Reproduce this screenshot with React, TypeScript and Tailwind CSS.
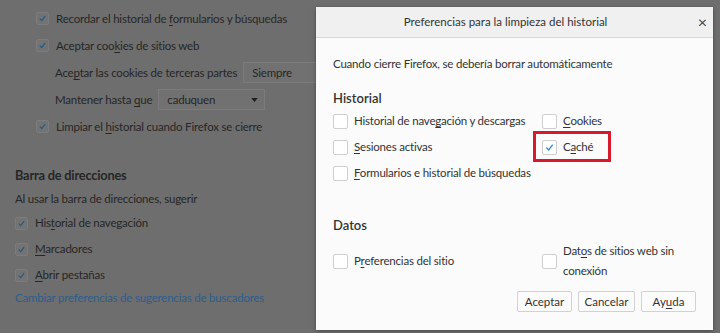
const font = { fontFamily: '"Lato", "Liberation Sans", sans-serif' };

const Check = ({ color }: { color: string }) => (
  <svg viewBox="0 0 16 16" className="h-full w-full">
    <polyline points="4.5,8.5 7,11 11.5,5" fill="none" stroke={color} strokeWidth={1.6} strokeLinecap="round" strokeLinejoin="round" />
  </svg>
);

// underlines one letter of a label (access key)
const Key = ({ text, k }: { text: string; k: number }) => (
  <>
    {text.slice(0, k)}
    <span className="underline underline-offset-2">{text[k]}</span>
    {text.slice(k + 1)}
  </>
);

const DimBox = ({ checked = true }: { checked?: boolean }) => (
  <span className="flex h-[13px] w-[13px] shrink-0 items-center justify-center rounded-[2px] border border-[#7c7c7c] bg-[#737373]">
    {checked && <Check color="#1f5a88" />}
  </span>
);

const DimRow = ({ children }: { children: React.ReactNode }) => (
  <div className="flex h-[26px] items-center gap-[7px] pl-[15px]">
    <DimBox />
    <span>{children}</span>
  </div>
);

const Box = ({ checked }: { checked?: boolean }) => (
  <span className="flex h-[15px] w-[15px] shrink-0 items-center justify-center rounded-[2px] border border-[#cfcfcf] bg-white">
    {checked && <Check color="#2a8ad4" />}
  </span>
);

const Option = ({ children, checked }: { children: React.ReactNode; checked?: boolean }) => (
  <div className="flex h-[26px] items-center gap-[6px] whitespace-nowrap">
    <Box checked={checked} />
    <span>{children}</span>
  </div>
);

const Button = ({ children, w }: { children: React.ReactNode; w: string }) => (
  <button className={`h-[21px] ${w} rounded-[2px] border border-[#d2d2d2] bg-[#fbfbfb] text-[11.5px] tracking-normal text-[#333]`}>
    {children}
  </button>
);

export default function App() {
  return (
    <div style={font} className="relative h-[333px] w-[720px] overflow-hidden bg-[#6e6e6e] text-[11.5px] tracking-[-0.2px] text-[#262626]">
      {/* page behind the dialog */}
      <div className="whitespace-nowrap pt-[5px]">
        <div className="flex h-[27px] items-center gap-[7px] pl-[36px]">
          <DimBox />
          <span>Recordar el historial de <Key text="formularios" k={0} /> y búsquedas</span>
        </div>
        <div className="flex h-[27px] items-center gap-[7px] pl-[36px]">
          <DimBox />
          <span>Aceptar coo<Key text="kies" k={0} /> de sitios web</span>
        </div>
        <div className="flex h-[27px] items-center gap-[6px] pl-[55px]">
          <span><Key text="Aceptar" k={3} /> las cookies de terceras partes</span>
          <span className="flex h-[21px] w-[120px] items-center border border-[#7b7b7b] bg-[#717171] pl-[8px]">Siempre</span>
        </div>
        <div className="flex h-[27px] items-center gap-[6px] pl-[55px]">
          <span>Mantener hasta <Key text="que" k={0} /></span>
          <span className="flex h-[21px] w-[107px] items-center justify-between border border-[#7b7b7b] bg-[#717171] pl-[8px] pr-[6px]">
            caduquen
            <svg viewBox="0 0 8 5" className="h-[4px] w-[7px]"><polygon points="0,0 8,0 4,5" fill="#1f1f1f" /></svg>
          </span>
        </div>
        <div className="flex h-[27px] items-center gap-[7px] pl-[36px]">
          <DimBox />
          <span>Limpiar el <Key text="historial" k={0} /> cuando Firefox se cierre</span>
        </div>

        <div className="mt-[25px] pl-[15px] text-[12.8px] font-bold leading-[20px]">Barra de direcciones</div>
        <div className="mt-[4px] pl-[15px] leading-[20px]">Al usar la barra de direcciones, sugerir</div>
        <div className="mt-[1px]">
          <DimRow><Key text="Historial" k={3} /> de navegación</DimRow>
          <DimRow><Key text="Marcadores" k={0} /></DimRow>
          <DimRow><Key text="Abrir" k={0} /> pestañas</DimRow>
        </div>
        <div className="pl-[15px] leading-[20px] text-[#2c5e8c]">Cambiar preferencias de sugerencias de buscadores</div>
      </div>

      {/* dialog */}
      <div className="absolute left-[316px] top-[7px] flex h-[323px] w-[397px] flex-col bg-[#fbfbfb] text-[#333] shadow-[0_1px_4px_rgba(0,0,0,0.35)]">
        <div className="relative flex h-[31px] shrink-0 items-center justify-center border-b border-[#d6d6d6] bg-[#f0f0f0] pr-[18px] tracking-normal text-[#333]">
          Preferencias para la limpieza del historial
          <span className="absolute right-[6px] top-[5px] text-[16px] leading-[20px] text-[#444]">×</span>
        </div>
        <div className="flex flex-col px-[17px]">
          <div className="mt-[16px] leading-[20px]">Cuando cierre Firefox, se debería borrar automáticamente</div>
          <div className="mt-[14px] text-[13px] font-semibold leading-[20px] tracking-normal">Historial</div>
          <div className="grid grid-cols-[209px_1fr]">
            <Option>Historial de nave<Key text="gación" k={0} /> y descargas</Option>
            <Option><Key text="Cookies" k={0} /></Option>
            <Option><Key text="Sesiones" k={0} /> activas</Option>
            <div className="relative">
              <Option checked><Key text="Caché" k={1} /></Option>
              <span className="pointer-events-none absolute -left-[9px] -top-[3px] h-[31px] w-[78px] border-[3px] border-[#d8182c]" />
            </div>
            <Option><Key text="Formularios" k={0} /> e historial de búsquedas</Option>
          </div>
          <div className="mt-[29px] text-[13px] font-semibold leading-[20px] tracking-normal">Datos</div>
          <div className="mt-[6px] grid grid-cols-[209px_1fr] items-center">
            <div className="flex items-center gap-[6px]">
              <Box />
              <span><Key text="Preferencias" k={1} /> del sitio</span>
            </div>
            <div className="flex items-center gap-[6px]">
              <Box />
              <span className="leading-[20px]"><Key text="Datos" k={3} /> de sitios web sin<br />conexión</span>
            </div>
          </div>
          <div className="mt-[10px] flex justify-end gap-[6px]">
            <Button w="w-[55px]">Aceptar</Button>
            <Button w="w-[57px]">Cancelar</Button>
            <Button w="w-[55px]"><Key text="Ayuda" k={2} /></Button>
          </div>
        </div>
      </div>
    </div>
  );
}
